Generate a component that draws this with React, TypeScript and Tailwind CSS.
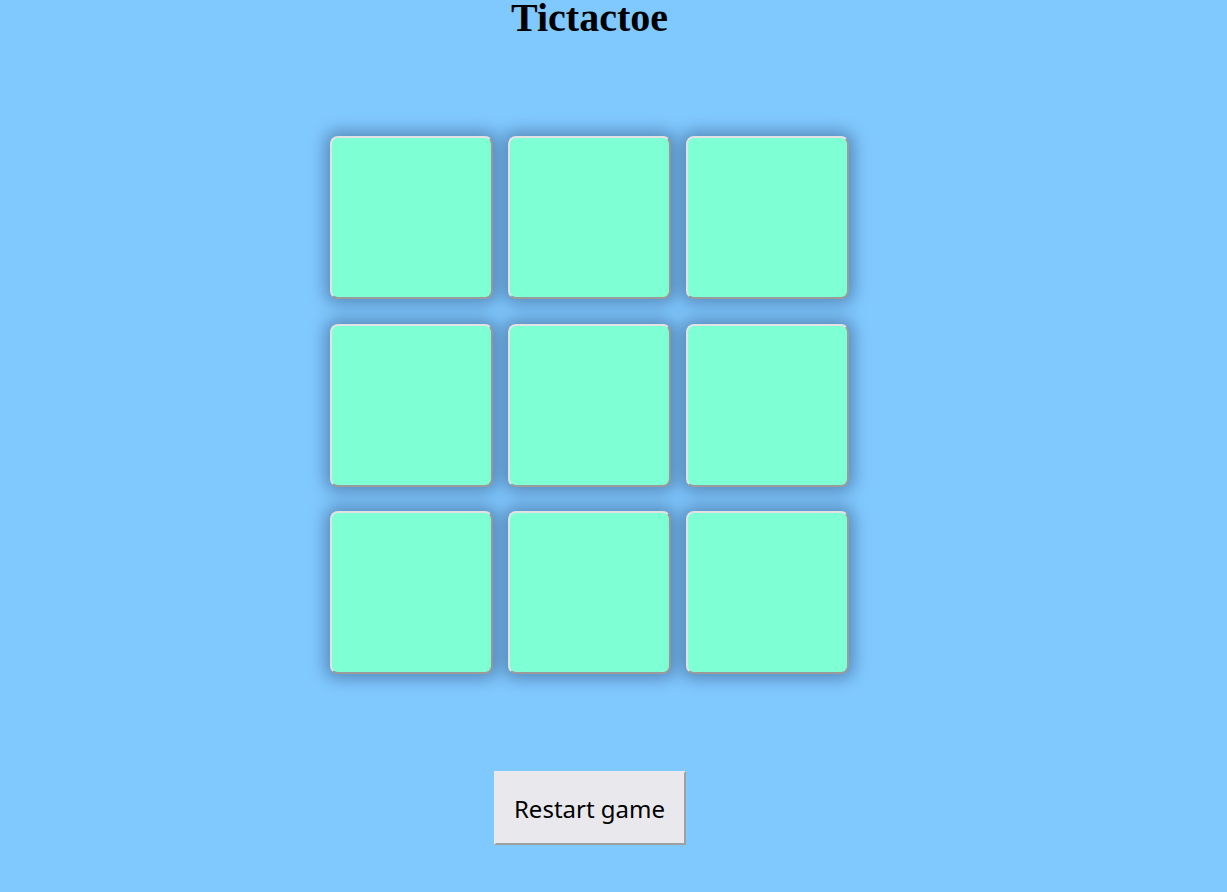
import React from "react";

export default function App() {
  const cells = Array.from({ length: 9 });
  return (
    <div className="min-h-[892px] w-full bg-[#80c9ff]">
      <div className="w-[1179px] flex flex-col items-center">
        <h1
          className="m-0 text-[40px] font-bold leading-[36px] text-black"
          style={{ fontFamily: '"Liberation Serif", "Times New Roman", serif' }}
        >
          Tictactoe
        </h1>
        <div className="mt-[100px] grid grid-cols-[repeat(3,163px)] grid-rows-[repeat(3,163px)] gap-x-[15px] gap-y-[24.5px]">
          {cells.map((_, i) => (
            <div
              key={i}
              className="rounded-[8px] border-2 border-t-[#e2e2e2] border-l-[#e2e2e2] border-r-[#9b9b9b] border-b-[#9b9b9b] bg-[#7fffd4] shadow-[0_0_16px_5px_rgba(20,40,80,0.38)]"
            />
          ))}
        </div>
        <button
          className="mt-[97px] h-[74px] w-[192px] border-2 border-t-[#e9e9ed] border-l-[#e9e9ed] border-r-[#a0a0a0] border-b-[#a0a0a0] bg-[#e9e9ed] pt-[2px] text-[24px] text-black"
          style={{ fontFamily: '"Noto Sans", "DejaVu Sans", sans-serif' }}
        >
          Restart game
        </button>
      </div>
    </div>
  );
}
